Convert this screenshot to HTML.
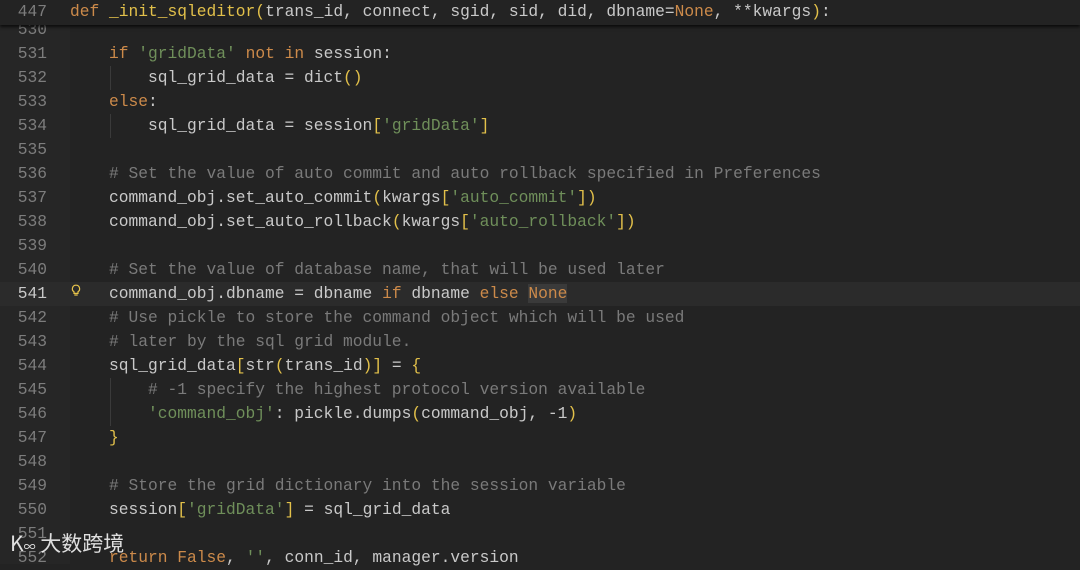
<!DOCTYPE html>
<html><head><meta charset="utf-8"><style>
html,body{margin:0;padding:0;}
body{width:1080px;height:564px;overflow:hidden;background:#232323;position:relative;font-family:"Liberation Mono",monospace;font-size:16.25px;color:#c9c9c9;}
.gut{position:absolute;left:0;top:0;width:70px;height:564px;background:#262626;}
.r{position:absolute;left:0;width:1080px;height:24px;line-height:24px;white-space:pre;}
.n{position:absolute;left:0;width:47px;text-align:right;color:#7d7d7d;}
.c{position:absolute;left:70px;}
.k{color:#cc8a4a}.s{color:#6f8f5a}.m{color:#7a7a7a}.y{color:#e2c04a}
.hl{background:#2b2b2b}
.guide{position:absolute;width:1px;background:#3a3a3a;}
.hdr{position:absolute;left:0;top:0;width:1080px;height:25px;background:#232323;box-shadow:0 2px 3px rgba(0,0,0,.7);}
.wm{position:absolute;left:10px;top:528px;color:rgba(255,255,255,.85);font-family:"Noto Sans CJK SC",sans-serif;font-size:21px;white-space:nowrap;}
</style></head><body>
<div class="gut"></div>
<div class="r" style="top:18px"><span class="n">530</span></div>
<div class="r" style="top:42px"><span class="n">531</span><span class="c">    <span class="k">if</span> <span class="s">'gridData'</span> <span class="k">not in</span> session:</span></div>
<div class="r" style="top:66px"><span class="n">532</span><span class="c">        sql_grid_data = dict<span class="y">()</span></span></div>
<div class="r" style="top:90px"><span class="n">533</span><span class="c">    <span class="k">else</span>:</span></div>
<div class="r" style="top:114px"><span class="n">534</span><span class="c">        sql_grid_data = session<span class="y">[</span><span class="s">'gridData'</span><span class="y">]</span></span></div>
<div class="r" style="top:138px"><span class="n">535</span></div>
<div class="r" style="top:162px"><span class="n">536</span><span class="c">    <span class="m"># Set the value of auto commit and auto rollback specified in Preferences</span></span></div>
<div class="r" style="top:186px"><span class="n">537</span><span class="c">    command_obj.set_auto_commit<span class="y">(</span>kwargs<span class="y">[</span><span class="s">'auto_commit'</span><span class="y">])</span></span></div>
<div class="r" style="top:210px"><span class="n">538</span><span class="c">    command_obj.set_auto_rollback<span class="y">(</span>kwargs<span class="y">[</span><span class="s">'auto_rollback'</span><span class="y">])</span></span></div>
<div class="r" style="top:234px"><span class="n">539</span></div>
<div class="r" style="top:258px"><span class="n">540</span><span class="c">    <span class="m"># Set the value of database name, that will be used later</span></span></div>
<div class="r hl" style="top:282px"><span class="n" style="color:#c8c8c8">541</span><svg style="position:absolute;left:71px;top:2px" width="10" height="13" viewBox="0 0 10 13"><path d="M5 1.2a3.6 3.6 0 0 0-2 6.6v1.6h4V7.8a3.6 3.6 0 0 0-2-6.6z M3.3 11h3.4" fill="none" stroke="#e8c44a" stroke-width="1.2"/></svg><span class="c">    command_obj.dbname = dbname <span class="k">if</span> dbname <span class="k">else</span> <span class="k" style="background:#3a3a3a">None</span></span></div>
<div class="r" style="top:306px"><span class="n">542</span><span class="c">    <span class="m"># Use pickle to store the command object which will be used</span></span></div>
<div class="r" style="top:330px"><span class="n">543</span><span class="c">    <span class="m"># later by the sql grid module.</span></span></div>
<div class="r" style="top:354px"><span class="n">544</span><span class="c">    sql_grid_data<span class="y">[</span>str<span class="y">(</span>trans_id<span class="y">)]</span> = <span class="y">{</span></span></div>
<div class="r" style="top:378px"><span class="n">545</span><span class="c">        <span class="m"># -1 specify the highest protocol version available</span></span></div>
<div class="r" style="top:402px"><span class="n">546</span><span class="c">        <span class="s">'command_obj'</span>: pickle.dumps<span class="y">(</span>command_obj, -1<span class="y">)</span></span></div>
<div class="r" style="top:426px"><span class="n">547</span><span class="c">    <span class="y">}</span></span></div>
<div class="r" style="top:450px"><span class="n">548</span></div>
<div class="r" style="top:474px"><span class="n">549</span><span class="c">    <span class="m"># Store the grid dictionary into the session variable</span></span></div>
<div class="r" style="top:498px"><span class="n">550</span><span class="c">    session<span class="y">[</span><span class="s">'gridData'</span><span class="y">]</span> = sql_grid_data</span></div>
<div class="r" style="top:522px"><span class="n">551</span></div>
<div class="r" style="top:546px"><span class="n">552</span><span class="c">    <span class="k">return False</span>, <span class="s">''</span>, conn_id, manager.version</span></div>
<div class="guide" style="left:110px;top:66px;height:24px"></div>
<div class="guide" style="left:110px;top:114px;height:24px"></div>
<div class="guide" style="left:110px;top:378px;height:48px"></div>
<div class="hdr"><div class="r" style="top:0"><span class="n">447</span><span class="c"><span class="k">def</span> <span class="y">_init_sqleditor(</span>trans_id, connect, sgid, sid, did, dbname=<span class="k">None</span>, **kwargs<span class="y">)</span>:</span></div></div>
<div class="wm">K<span style="font-size:12px">∞</span> 大数跨境</div>
</body></html>
